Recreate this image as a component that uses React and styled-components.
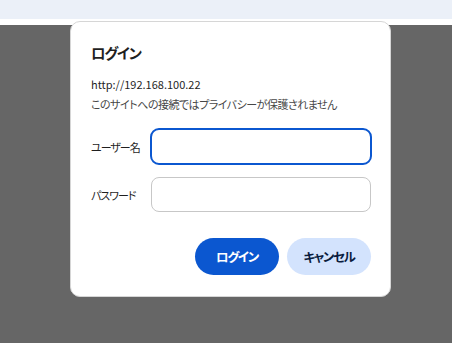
import React from "react";
import styled, { createGlobalStyle } from "styled-components";

const Global = createGlobalStyle`
  html, body { margin: 0; padding: 0; height: 100%; }
  body {
    background: #666666;
    font-family: "Noto Sans CJK JP", "Noto Sans", sans-serif;
    font-feature-settings: "palt";
    overflow: hidden;
  }
`;

const Page = styled.div`
  position: relative;
  width: 452px;
  height: 343px;
  display: flex;
  flex-direction: column;
`;

const TopBar = styled.div`
  height: 19px;
  background: #ebf0f8;
`;

const Strip = styled.div`
  height: 6px;
  background: #ffffff;
`;

const Overlay = styled.div`
  flex: 1;
  background: #666666;
`;

const Dialog = styled.div`
  position: absolute;
  left: 70px;
  top: 21px;
  width: 321px;
  height: 276px;
  box-sizing: border-box;
  background: #ffffff;
  border: 1px solid #d6d6d6;
  border-radius: 10px;
  padding: 18px 19px 0 20px;
  display: flex;
  flex-direction: column;
  color: #1f1f1f;
`;

const Title = styled.h1`
  margin: 0;
  font-size: 14.5px;
  font-weight: 700;
  line-height: 26px;
  letter-spacing: -1.3px;
  color: #1f1f1f;
`;

const Url = styled.div`
  margin-top: 8px;
  font-size: 11px;
  line-height: 20px;
  color: #1f1f1f;
`;

const Note = styled.div`
  font-size: 11px;
  line-height: 20px;
  letter-spacing: -0.5px;
  color: #474747;
`;

const Form = styled.div`
  margin-top: 15px;
  display: flex;
  flex-direction: column;
  gap: 13px;
`;

const Row = styled.div`
  display: flex;
  align-items: center;
`;

const Label = styled.label`
  width: 60px;
  font-size: 11px;
  letter-spacing: -1px;
  color: #1f1f1f;
`;

const Input = styled.input`
  box-sizing: border-box;
  width: 220px;
  height: 35px;
  border: 1px solid ${(p) => (p.$focused ? "transparent" : "#c7c7c7")};
  border-radius: 8px;
  background: #fff;
  outline: ${(p) => (p.$focused ? "2px solid #0b57d0" : "none")};
  outline-offset: -1px;
  padding: 0 10px;
  font-size: 13px;
`;

const Actions = styled.div`
  margin-top: 26px;
  display: flex;
  justify-content: flex-end;
  gap: 8px;
`;

const Button = styled.button`
  width: 84px;
  height: 37px;
  border: none;
  border-radius: 19px;
  font-family: inherit;
  font-feature-settings: "palt";
  font-size: 12.5px;
  font-weight: 700;
  letter-spacing: -1.3px;
  background: ${(p) => (p.$primary ? "#0b57d0" : "#d3e3fd")};
  color: ${(p) => (p.$primary ? "#ffffff" : "#0a1c3d")};
  padding: 0;
`;

export default function App() {
  return (
    <>
      <Global />
      <Page>
        <TopBar />
        <Strip />
        <Overlay />
        <Dialog>
          <Title>ログイン</Title>
          <Url>http://192.168.100.22</Url>
          <Note>このサイトへの接続ではプライバシーが保護されません</Note>
          <Form>
            <Row>
              <Label>ユーザー名</Label>
              <Input $focused type="text" />
            </Row>
            <Row>
              <Label>パスワード</Label>
              <Input type="password" />
            </Row>
          </Form>
          <Actions>
            <Button $primary>ログイン</Button>
            <Button>キャンセル</Button>
          </Actions>
        </Dialog>
      </Page>
    </>
  );
}
